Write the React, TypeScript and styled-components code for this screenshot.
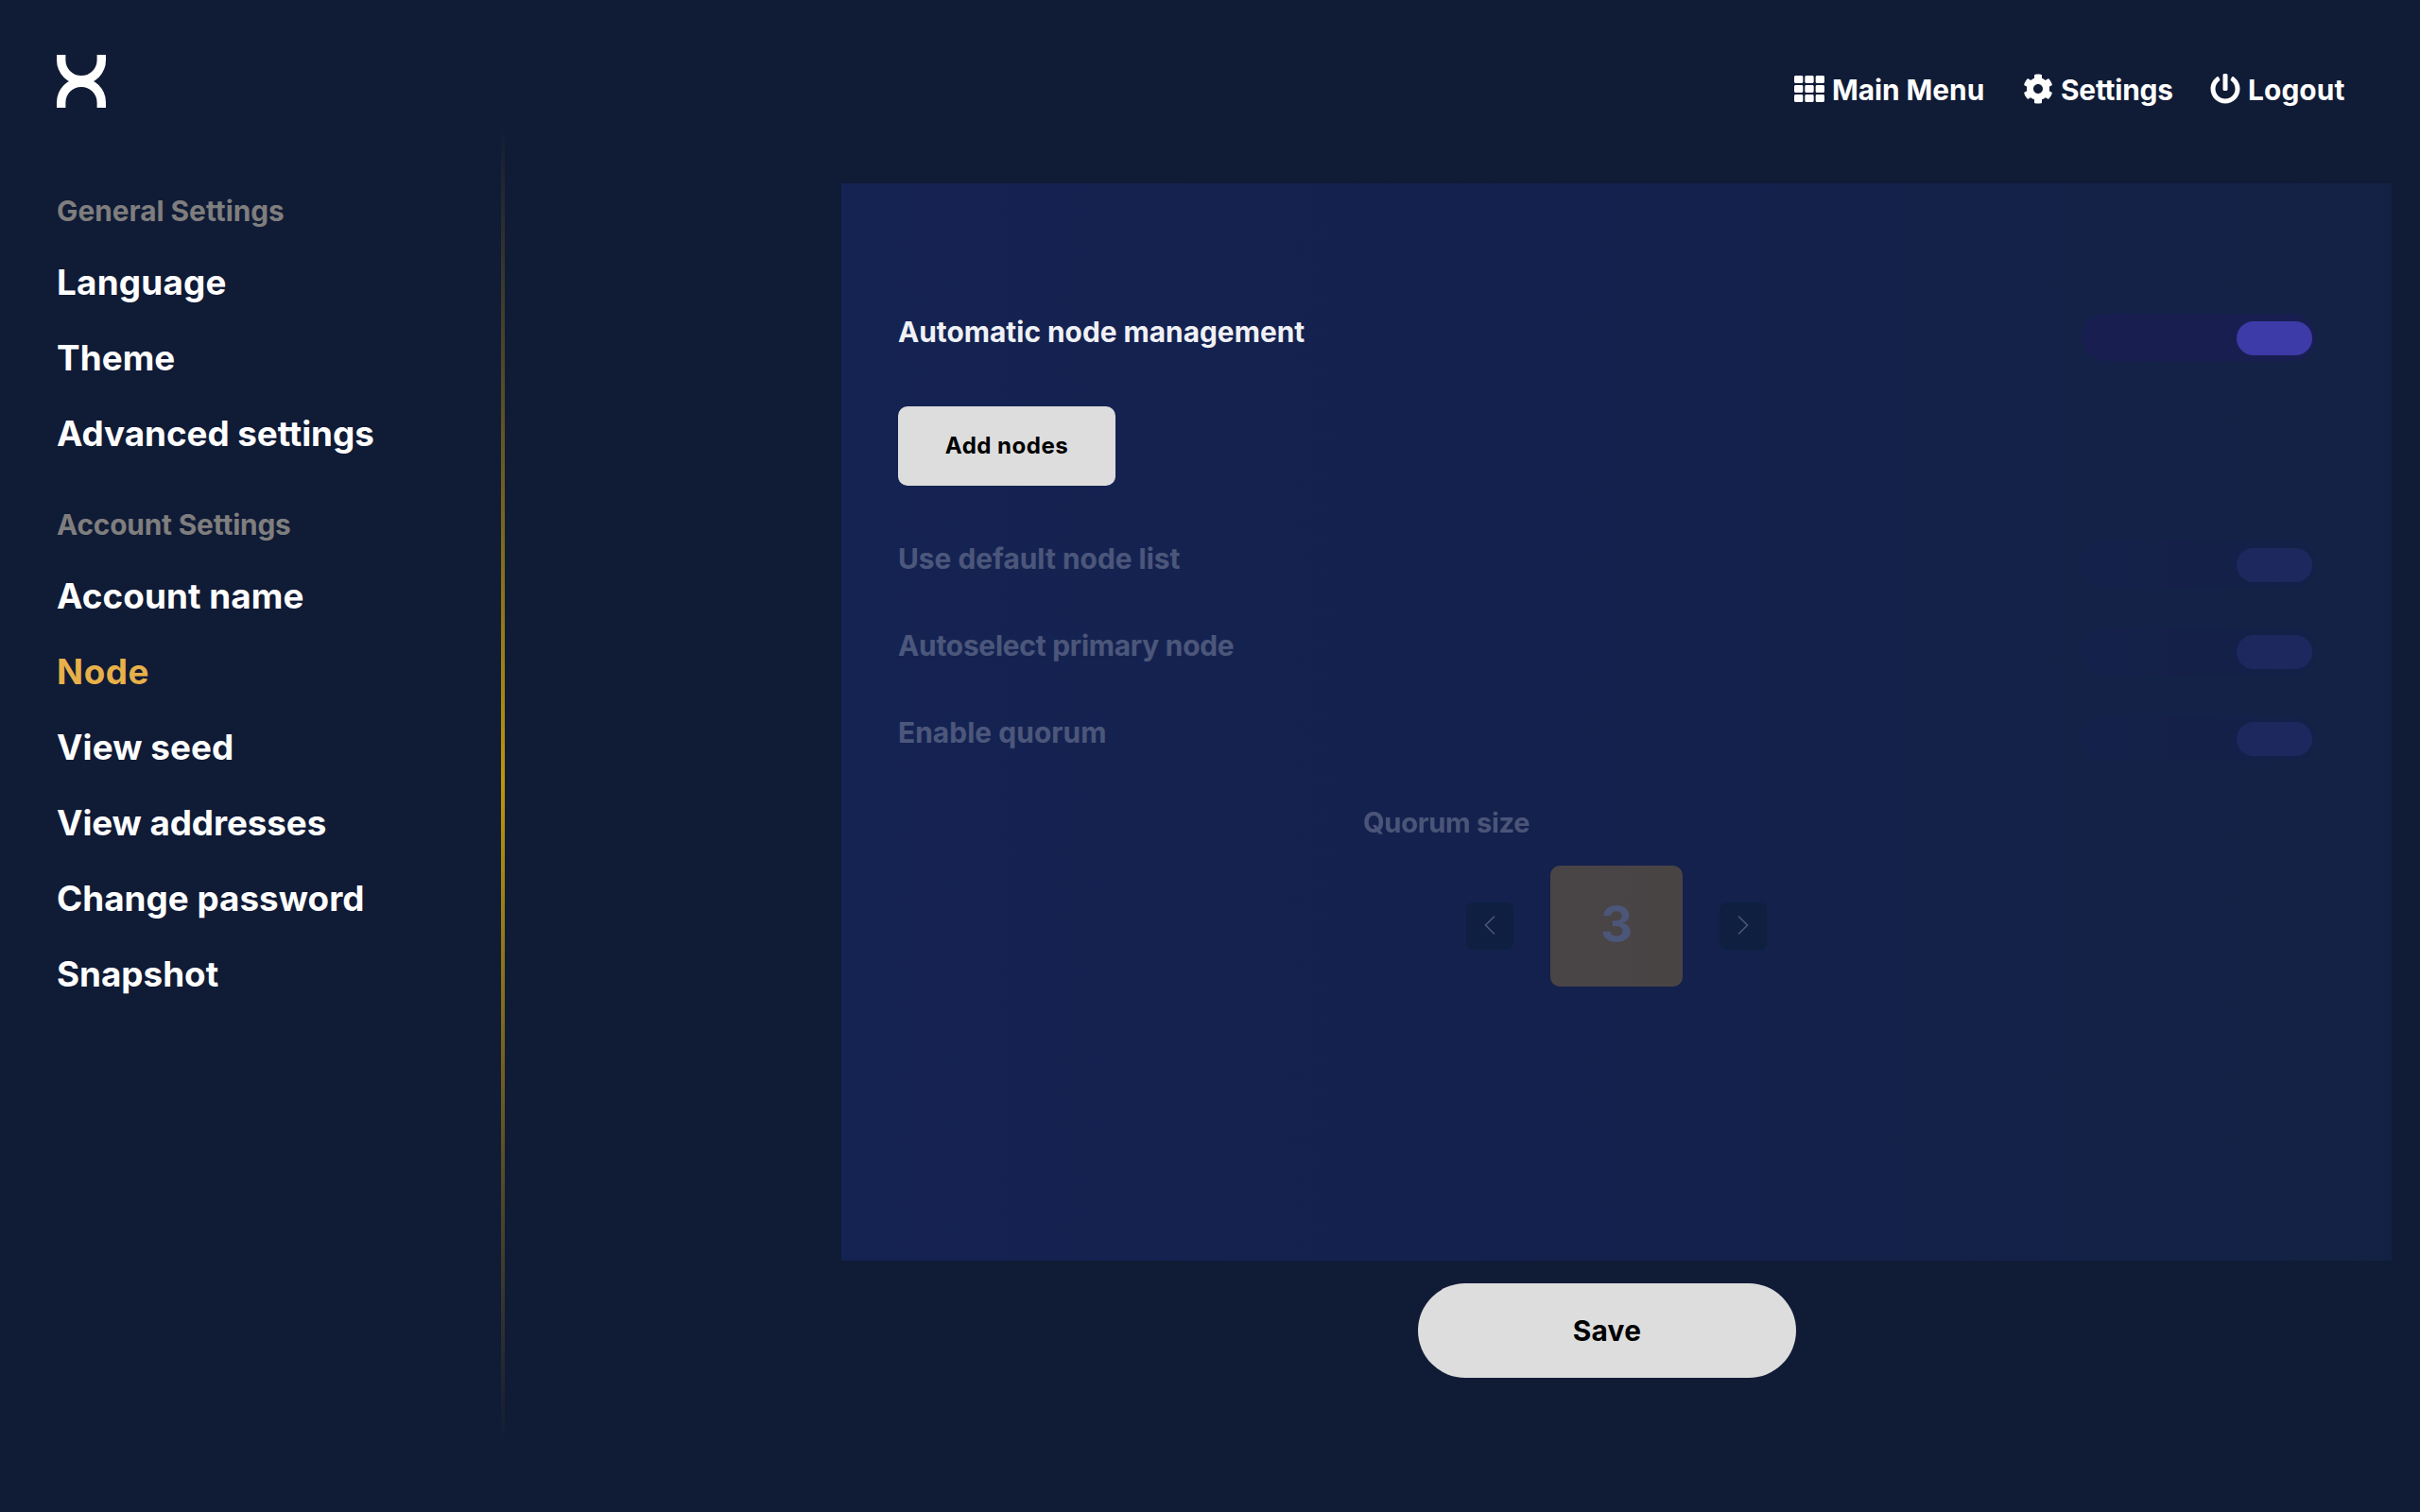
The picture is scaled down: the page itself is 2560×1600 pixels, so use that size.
import React from "react";
import styled, { createGlobalStyle } from "styled-components";
import { FaCog, FaPowerOff, FaTh } from "react-icons/fa";

const GlobalStyle = createGlobalStyle`
  *, *::before, *::after { box-sizing: border-box; }
  body {
    margin: 0;
    background: #101b36;
    color: #fff;
    font-family: Inter, "Liberation Sans", sans-serif;
    font-weight: 700;
  }
`;

const Page = styled.div`
  display: flex;
  flex-direction: column;
  width: 2560px;
  height: 1600px;
  overflow: hidden;
`;

const Header = styled.header`
  display: flex;
  justify-content: space-between;
  align-items: flex-start;
  height: 131px;
  padding: 58px 80px 0 60px;
`;

const Logo = styled.svg`
  display: block;
  width: 52px;
  height: 56px;
`;

const Menu = styled.nav`
  display: flex;
  padding-top: 17px;
`;

const MenuLink = styled.a<{ $width: number; $spacing: number }>`
  display: flex;
  align-items: center;
  gap: 8px;
  width: ${(p) => p.$width}px;
  height: 38px;
  font-size: 29.85px;
  line-height: 38px;
  letter-spacing: ${(p) => p.$spacing}px;
  white-space: nowrap;

  svg {
    flex: none;
    width: 32px;
    height: 32px;
  }

  span {
    padding-top: 1px;
  }
`;

const Body = styled.div`
  display: flex;
  flex: 1;
`;

const Sidebar = styled.aside`
  width: 530px;
  padding: 72px 0 0 60px;
`;

const Divider = styled.div`
  width: 4px;
  height: 1394px;
  background: linear-gradient(180deg, rgba(190, 150, 10, 0) 0%, #bd960c 50%, rgba(190, 150, 10, 0) 100%);
`;

const GroupTitle = styled.h2<{ $spacing: number }>`
  margin: 0;
  height: 56px;
  font-size: 29.85px;
  font-weight: 700;
  line-height: 40px;
  letter-spacing: ${(p) => p.$spacing}px;
  color: #7f7e7e;
`;

const Group = styled.ul`
  margin: 0 0 36px;
  padding: 0;
  list-style: none;
`;

const GroupItem = styled.li<{ $active?: boolean; $spacing: number }>`
  height: 80px;
  font-size: 36.8px;
  line-height: 80px;
  letter-spacing: ${(p) => p.$spacing}px;
  color: ${(p) => (p.$active ? "#e8b049" : "#fff")};
`;

const Main = styled.main`
  display: flex;
  flex-direction: column;
  width: 1640px;
  margin: 63px 0 0 356px;
`;

const Panel = styled.section`
  height: 1140px;
  padding: 138px 80px 0 60px;
  background: linear-gradient(90deg, #152353 0%, #14214d 50%, #132244 100%);
`;

const SettingRow = styled.div<{ $disabled?: boolean; $height: number }>`
  display: flex;
  justify-content: space-between;
  align-items: flex-start;
  height: ${(p) => p.$height}px;
  opacity: ${(p) => (p.$disabled ? 0.25 : 1)};
`;

const Label = styled.span<{ $spacing: number }>`
  font-size: 29.85px;
  line-height: 38px;
  letter-spacing: ${(p) => p.$spacing}px;
  color: #f0f1f6;
`;

const Track = styled.div`
  display: flex;
  justify-content: flex-end;
  width: 248px;
  height: 50px;
  padding: 8px 4px 6px;
  border-radius: 25px;
  background: #191e50;
`;

const Thumb = styled.div`
  width: 80px;
  height: 36px;
  border-radius: 18px;
  background: #3c3ba8;
`;

const AddButton = styled.button`
  display: block;
  width: 230px;
  height: 84px;
  margin-bottom: 58px;
  padding: 0;
  border: 0;
  border-radius: 10px;
  background: #ddd;
  color: #000;
  font: 700 24.1px/82px Inter, "Liberation Sans", sans-serif;
  letter-spacing: 0.45px;
`;

const Quorum = styled.div`
  padding: 3px 0 0 492px;
  opacity: 0.25;
`;

const QuorumLabel = styled.div`
  height: 65px;
  font-size: 29.2px;
  line-height: 40px;
  letter-spacing: -0.35px;
  color: #f0f1f6;
`;

const Stepper = styled.div`
  display: flex;
  align-items: center;
  justify-content: space-between;
  width: 322px;
  margin-left: 107px;
`;

const StepButton = styled.button`
  display: flex;
  align-items: center;
  justify-content: center;
  width: 54px;
  height: 54px;
  padding: 0 0 2px;
  border: 2px solid #082c48;
  border-radius: 9px;
  background: #001f22;
`;

const StepValue = styled.div`
  width: 140px;
  height: 128px;
  border-radius: 10px;
  background: #e8b02c;
  color: #f0f8ff;
  font-size: 53px;
  line-height: 124px;
  text-align: center;
`;

const SaveButton = styled.button`
  width: 400px;
  height: 100px;
  margin: 24px 0 0 610px;
  padding: 0;
  border: 0;
  border-radius: 50px;
  background: #ddd;
  color: #000;
  font: 700 29.85px/97px Inter, "Liberation Sans", sans-serif;
  letter-spacing: 0.2px;
`;

const generalItems = [
  { label: "Language", spacing: 0.25 },
  { label: "Theme", spacing: 0.1 },
  { label: "Advanced settings", spacing: -0.05 },
];

const accountItems = [
  { label: "Account name", spacing: 0.1 },
  { label: "Node", spacing: 0.6, active: true },
  { label: "View seed", spacing: 0.1 },
  { label: "View addresses", spacing: -0.08 },
  { label: "Change password", spacing: 0.03 },
  { label: "Snapshot", spacing: 0 },
];

const nodeOptions = [
  { label: "Use default node list", spacing: 0.02 },
  { label: "Autoselect primary node", spacing: -0.23 },
  { label: "Enable quorum", spacing: 0.08 },
];

const Toggle = () => (
  <Track>
    <Thumb />
  </Track>
);

const Chevron = ({ points }: { points: string }) => (
  <svg width="12" height="20" viewBox="0 0 12 20" fill="none" stroke="#f0f1f6" strokeWidth="1.6">
    <polyline points={points} strokeLinecap="round" />
  </svg>
);

export default function App() {
  return (
    <Page>
      <GlobalStyle />
      <Header>
        <Logo viewBox="0 0 52 56" fill="none" stroke="#fff" strokeWidth="9.4">
          <path d="M4.7 0V5.5A21.3 21.3 0 0 0 47.3 5.5V0" />
          <path d="M4.7 56V50.5A21.3 21.3 0 0 1 47.3 50.5V56" />
        </Logo>
        <Menu>
          <MenuLink $width={242} $spacing={-0.05}>
            <FaTh />
            <span>Main Menu</span>
          </MenuLink>
          <MenuLink $width={198} $spacing={-0.2}>
            <FaCog />
            <span>Settings</span>
          </MenuLink>
          <MenuLink $width={142} $spacing={0.1}>
            <FaPowerOff />
            <span>Logout</span>
          </MenuLink>
        </Menu>
      </Header>
      <Body>
        <Sidebar>
          <GroupTitle $spacing={-0.02}>General Settings</GroupTitle>
          <Group>
            {generalItems.map((item) => (
              <GroupItem key={item.label} $spacing={item.spacing}>
                {item.label}
              </GroupItem>
            ))}
          </Group>
          <GroupTitle $spacing={-0.18}>Account Settings</GroupTitle>
          <Group>
            {accountItems.map((item) => (
              <GroupItem key={item.label} $spacing={item.spacing} $active={item.active}>
                {item.label}
              </GroupItem>
            ))}
          </Group>
        </Sidebar>
        <Divider />
        <Main>
          <Panel>
            <SettingRow $height={98}>
              <Label $spacing={0}>Automatic node management</Label>
              <Toggle />
            </SettingRow>
            <AddButton>Add nodes</AddButton>
            {nodeOptions.map((option) => (
              <SettingRow key={option.label} $height={92} $disabled>
                <Label $spacing={option.spacing}>{option.label}</Label>
                <Toggle />
              </SettingRow>
            ))}
            <Quorum>
              <QuorumLabel>Quorum size</QuorumLabel>
              <Stepper>
                <StepButton>
                  <Chevron points="10.5,1 1.5,10 10.5,19" />
                </StepButton>
                <StepValue>3</StepValue>
                <StepButton>
                  <Chevron points="1.5,1 10.5,10 1.5,19" />
                </StepButton>
              </Stepper>
            </Quorum>
          </Panel>
          <SaveButton>Save</SaveButton>
        </Main>
      </Body>
    </Page>
  );
}
